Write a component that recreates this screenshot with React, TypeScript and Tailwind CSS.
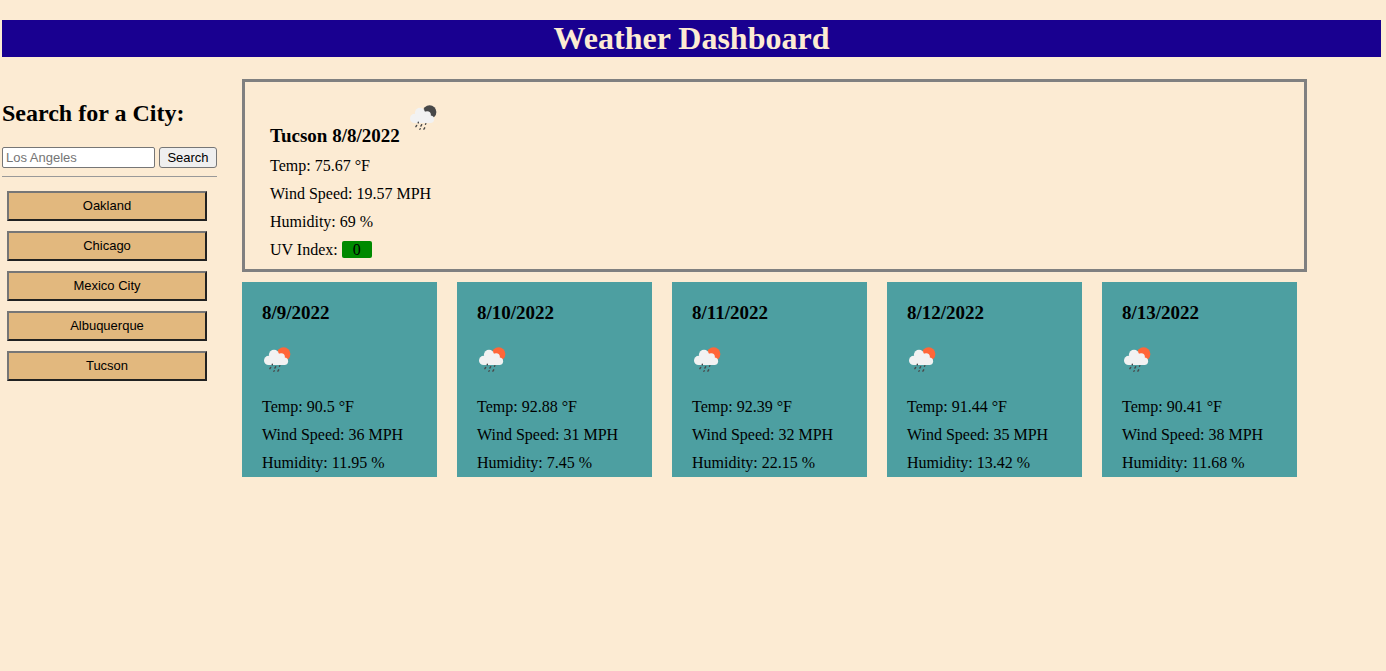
import React from "react";

type Forecast = { date: string; temp: string; wind: string; humidity: string };

const cities = ["Oakland", "Chicago", "Mexico City", "Albuquerque", "Tucson"];

const forecasts: Forecast[] = [
  { date: "8/9/2022", temp: "90.5", wind: "36", humidity: "11.95" },
  { date: "8/10/2022", temp: "92.88", wind: "31", humidity: "7.45" },
  { date: "8/11/2022", temp: "92.39", wind: "32", humidity: "22.15" },
  { date: "8/12/2022", temp: "91.44", wind: "35", humidity: "13.42" },
  { date: "8/13/2022", temp: "90.41", wind: "38", humidity: "11.68" },
];

function RainIcon({ disc, className }: { disc: string; className?: string }) {
  return (
    <svg width="28" height="28" viewBox="0 0 28 28" className={className} aria-hidden="true">
      <circle cx="20.6" cy="8" r="6.8" fill={disc} />
      <g fill="#f2f2f2">
        <circle cx="5.6" cy="14.4" r="4.6" />
        <circle cx="11" cy="8.8" r="5.1" />
        <circle cx="18.1" cy="11.1" r="3.8" />
        <circle cx="21.4" cy="15.3" r="3.7" />
        <path d="M5.6 12 10 8h6l6 5v6H5.6Z" />
      </g>
      <g stroke="#484848" strokeWidth="1.4" strokeLinecap="round">
        <path d="M9.3 18.3v.6M7.7 21.4l-.8 1.3M12.7 20.7l-.8 1.4M16.8 19.7l-.3.6M11.2 24.7l-.3.6M15.7 23.8l-.8 1.4" />
      </g>
    </svg>
  );
}

function ForecastCard({ day }: { day: Forecast }) {
  return (
    <article className="h-[195px] w-[195px] bg-[#4d9fa1] px-5 pt-5">
      <h3 className="text-[19px] leading-[22px] font-bold">{day.date}</h3>
      <RainIcon disc="#ff6638" className="mt-[22px] mb-[19px] ml-px" />
      <p className="leading-7">Temp: {day.temp} °F</p>
      <p className="leading-7">Wind Speed: {day.wind} MPH</p>
      <p className="leading-7">Humidity: {day.humidity} %</p>
    </article>
  );
}

export default function App() {
  return (
    <div className="min-h-screen bg-[#fcebd3] pt-5 pr-[5px] pl-0.5 font-['Liberation_Serif',serif] text-base text-black">
      <header className="bg-[#190090]">
        <h1 className="text-center text-[32px] leading-[37px] font-bold text-[#fcebd3]">
          Weather Dashboard
        </h1>
      </header>

      <div className="mt-[22px] flex items-start gap-[25px]">
        <aside className="w-[215px] shrink-0 pt-5">
          <form onSubmit={(e) => e.preventDefault()}>
            <h2 className="text-2xl leading-7 font-bold">
              <label htmlFor="city">Search for a City:</label>
            </h2>
            <div className="mt-5 flex gap-1 font-['Liberation_Sans',sans-serif] text-[13px]">
              <input
                id="city"
                type="text"
                placeholder="Los Angeles"
                className="h-[21px] w-[153px] rounded-[2px] border border-[#767676] bg-white px-[3px] placeholder:text-[#757575]"
              />
              <button
                type="submit"
                className="h-[21px] flex-1 rounded-[3px] border border-[#767676] bg-[#efefef] leading-[19px]"
              >
                Search
              </button>
            </div>
          </form>
          <hr className="mt-2 border-t border-[#999999]" />
          <div className="mt-3.5 flex flex-col gap-2.5 pr-2.5 pl-[5px] font-['Liberation_Sans',sans-serif] text-[13px]">
            {cities.map((city) => (
              <button
                key={city}
                type="button"
                className="h-[30px] border-2 border-t-[#767676] border-r-[#212121] border-b-[#212121] border-l-[#767676] bg-[#e2b87e]"
              >
                {city}
              </button>
            ))}
          </div>
        </aside>

        <main className="mr-[74px] flex-1">
          <section className="border-3 border-[#808080] px-[25px] pt-[22px] pb-[5px]">
            <div className="flex">
              <h3 className="pt-[21px] text-[19px] leading-[22px] font-bold">Tucson 8/8/2022</h3>
              <RainIcon disc="#484848" className="ml-[9px]" />
            </div>
            <p className="mt-[5px] leading-7">Temp: 75.67 °F</p>
            <p className="leading-7">Wind Speed: 19.57 MPH</p>
            <p className="leading-7">Humidity: 69 %</p>
            <p className="leading-7">
              UV Index: <span className="rounded-[2px] bg-[#008a00] px-[11px]">0</span>
            </p>
          </section>
          <section className="mt-2.5 flex flex-wrap gap-5">
            {forecasts.map((day) => (
              <ForecastCard key={day.date} day={day} />
            ))}
          </section>
        </main>
      </div>
    </div>
  );
}
